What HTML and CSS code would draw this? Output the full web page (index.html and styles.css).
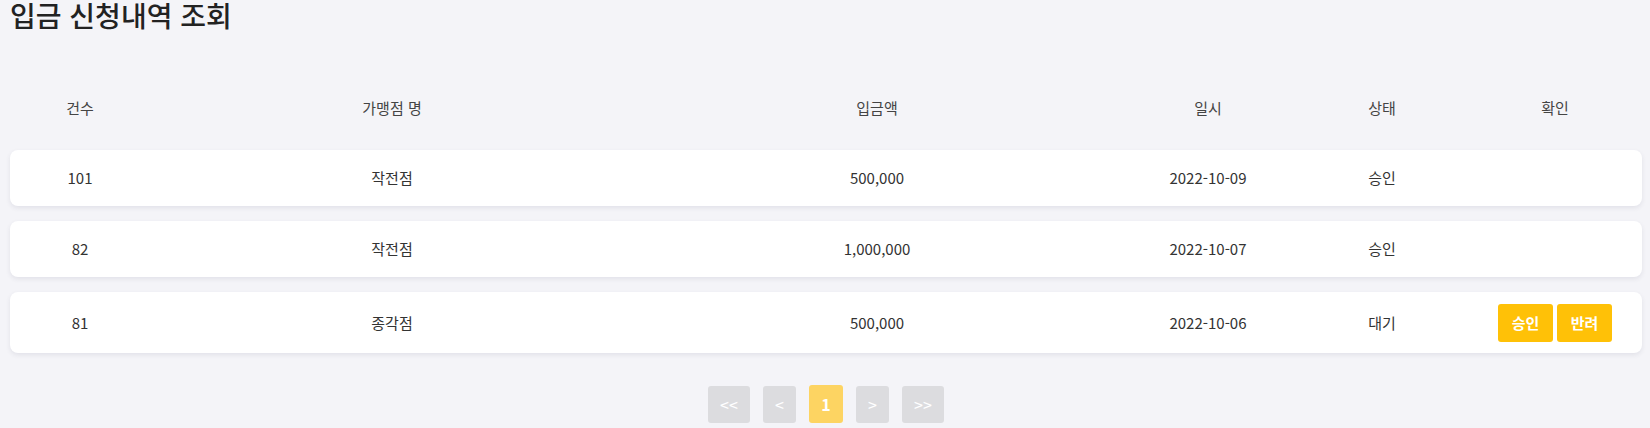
FILE: index.html
```html
<!DOCTYPE html>
<html lang="ko">
<head>
<meta charset="utf-8">
<title>입금 신청내역 조회</title>
<link rel="stylesheet" href="styles.css">
</head>
<body>
<div class="page">
  <h1 class="title">입금 신청내역 조회</h1>
  <div class="list">
    <div class="row head">
      <div>건수</div><div>가맹점 명</div><div>입금액</div><div>일시</div><div>상태</div><div>확인</div>
    </div>
    <div class="row card">
      <div>101</div><div>작전점</div><div>500,000</div><div>2022-10-09</div><div>승인</div><div></div>
    </div>
    <div class="row card">
      <div>82</div><div>작전점</div><div>1,000,000</div><div>2022-10-07</div><div>승인</div><div></div>
    </div>
    <div class="row card">
      <div>81</div><div>종각점</div><div>500,000</div><div>2022-10-06</div><div>대기</div>
      <div class="actions"><button class="btn">승인</button><button class="btn">반려</button></div>
    </div>
  </div>
  <div class="pager">
    <button class="pg wide">&lt;&lt;</button>
    <button class="pg">&lt;</button>
    <button class="pg active">1</button>
    <button class="pg">&gt;</button>
    <button class="pg wide">&gt;&gt;</button>
  </div>
</div>
</body>
</html>
```
FILE: styles.css
```css
* { box-sizing: border-box; }
html, body { margin: 0; padding: 0; }
body {
  background: #f4f4f8;
  font-family: "Noto Sans CJK KR", "Noto Sans", sans-serif;
  color: #333;
}
.page { padding: 0 8px 0 10px; }
.title {
  margin: 0;
  padding-top: 0;
  font-size: 28px;
  line-height: 30px;
  font-weight: 500;
  color: #222;
}
.list {
  margin-top: 50px;
  display: flex;
  flex-direction: column;
  gap: 15px;
}
.row {
  display: grid;
  grid-template-columns: 140px 484px 486px 176px 172px 174px;
  align-items: center;
  min-height: 56px;
  padding: 11.5px 0;
  font-size: 15px;
  line-height: 22px;
  text-align: center;
}
.head { color: #444; margin-bottom: -1px; }
.card {
  background: #fff;
  border-radius: 8px;
  box-shadow: 0 2px 5px rgba(40, 40, 80, 0.09);
  color: #333;
}
.actions { display: flex; justify-content: center; gap: 4px; }
.btn {
  width: 55px;
  height: 38px;
  border: none;
  border-radius: 3px;
  background: #ffc107;
  color: #fff;
  font-family: inherit;
  font-size: 15px;
  font-weight: 700;
  padding: 0;
}
.pager {
  margin-top: 32px;
  display: flex;
  justify-content: center;
  align-items: center;
  gap: 13px;
}
.pg {
  width: 33px;
  height: 37px;
  border: none;
  border-radius: 3px;
  background: #dcdcdf;
  color: #fff;
  font-family: inherit;
  font-size: 16px;
  padding: 0;
}
.pg.wide { width: 42px; }
.pg.active { width: 34px; height: 38px; background: #fdd462; font-weight: 700; }
```
